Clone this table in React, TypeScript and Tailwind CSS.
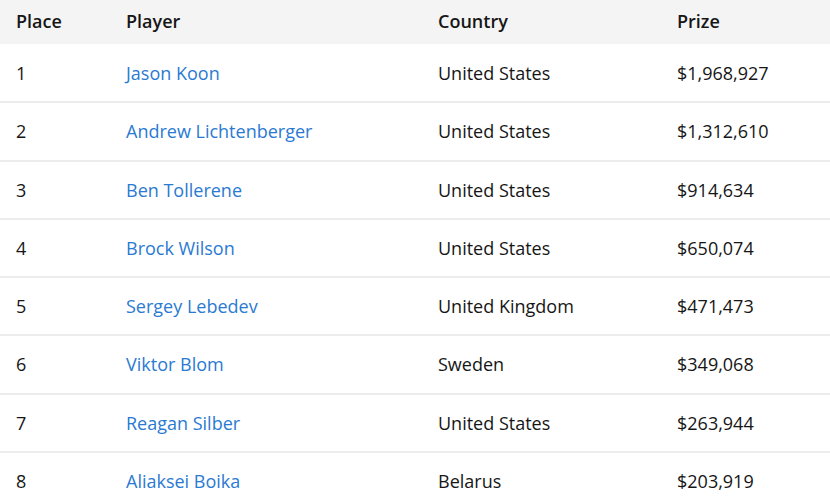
import React from 'react';

interface Result {
    place: number;
    player: string;
    country: string;
    prize: string;
}

const RESULTS: Result[] = [
    { place: 1, player: 'Jason Koon', country: 'United States', prize: '$1,968,927' },
    { place: 2, player: 'Andrew Lichtenberger', country: 'United States', prize: '$1,312,610' },
    { place: 3, player: 'Ben Tollerene', country: 'United States', prize: '$914,634' },
    { place: 4, player: 'Brock Wilson', country: 'United States', prize: '$650,074' },
    { place: 5, player: 'Sergey Lebedev', country: 'United Kingdom', prize: '$471,473' },
    { place: 6, player: 'Viktor Blom', country: 'Sweden', prize: '$349,068' },
    { place: 7, player: 'Reagan Silber', country: 'United States', prize: '$263,944' },
    { place: 8, player: 'Aliaksei Boika', country: 'Belarus', prize: '$203,919' },
];

export default function App() {
    return (
        <div className="w-[830px] h-[503px] overflow-hidden bg-white font-['Open_Sans',sans-serif] text-[18px] text-[#161616]">
            <table className="w-full border-collapse table-fixed">
                <colgroup>
                    <col className="w-[110px]" />
                    <col className="w-[312px]" />
                    <col className="w-[239px]" />
                    <col />
                </colgroup>
                <thead>
                    <tr className="h-[44px] bg-[#f4f4f4]">
                        <th className="pl-4 pb-[2px] text-left font-semibold">Place</th>
                        <th className="pl-4 pb-[2px] text-left font-semibold">Player</th>
                        <th className="pl-4 pb-[2px] text-left font-semibold">Country</th>
                        <th className="pl-4 pb-[2px] text-left font-semibold">Prize</th>
                    </tr>
                </thead>
                <tbody>
                    {RESULTS.map(r => (
                        <tr key={r.place} className="h-[58.25px] border-b-2 border-[#ececec]">
                            <td className="pl-4 pt-[1px]">{r.place}</td>
                            <td className="pl-4 pt-[1px]">
                                <a href="#" className="text-[#2a7ad2]">{r.player}</a>
                            </td>
                            <td className="pl-4 pt-[1px]">{r.country}</td>
                            <td className="pl-4 pt-[1px]">{r.prize}</td>
                        </tr>
                    ))}
                </tbody>
            </table>
        </div>
    );
}
